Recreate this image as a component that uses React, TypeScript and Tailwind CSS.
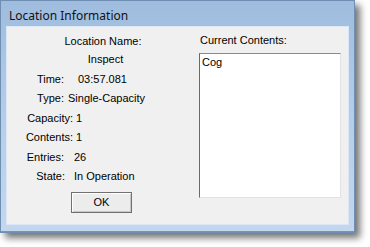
const rows = [
  { label: "Time:", value: "03:57.081", lw: "w-[57px]", gap: "ml-[14px]" },
  { label: "Type:", value: "Single-Capacity", lw: "w-[57px]", gap: "ml-[4px]" },
  { label: "Capacity:", value: "1", lw: "w-[66px]", gap: "ml-[3px]" },
  { label: "Contents:", value: "1", lw: "w-[66px]", gap: "ml-[3px]" },
  { label: "Entries:", value: "26", lw: "w-[57px]", gap: "ml-[10px]" },
  { label: "State:", value: "In Operation", lw: "w-[58px]", gap: "ml-[9px]" },
];

export default function App() {
  return (
    <div className="h-[247px] w-[370px] bg-white">
      <div className="flex h-[233px] w-[355px] flex-col border border-[#6f8fb2] bg-gradient-to-b from-[#9fbcde] via-[#b6cde9] to-[#c3d7ee] shadow-[5px_5px_7px_rgba(0,0,0,0.55)]">
        {/* title bar */}
        <div className="flex h-[25px] shrink-0 items-center pl-[8px] pt-[5px] text-[12px] text-[#111] [font-family:'Noto_Sans',sans-serif]">
          Location Information
        </div>

        {/* client area */}
        <div className="mx-[5px] flex flex-1 border border-[#dbe7f4] bg-[#f0f0f0] text-[11px] text-black [font-family:'Liberation_Sans',Arial,sans-serif]">
          <div className="flex w-[192px] flex-col pt-[5px]">
            <div className="flex h-[18px] items-center justify-center">Location Name:</div>
            <div className="flex h-[19px] items-center justify-center pl-[5px]">Inspect</div>
            {rows.map((r) => (
              <div key={r.label} className="flex h-[19.5px] items-center">
                <span className={`${r.lw} text-right`}>{r.label}</span>
                <span className={r.gap}>{r.value}</span>
              </div>
            ))}
            <button
              type="button"
              className="mt-[6px] ml-[64px] h-[21px] w-[61px] border border-[#707070] bg-[#ececec] text-[11px] shadow-[inset_1px_1px_0_#ffffff,inset_-1px_-1px_0_#c8c8c8]"
            >
              OK
            </button>
          </div>

          <div className="flex flex-col pt-[4px]">
            <div className="flex h-[18px] items-center pl-[1px]">Current Contents:</div>
            <div className="mt-[4px] h-[145px] w-[142px] border border-t-[#8a8a8a] border-l-[#6a6a6a] border-r-[#e2e2e2] border-b-[#e2e2e2] bg-white pl-[2px] pt-[2px] leading-[13px]">
              Cog
            </div>
          </div>
        </div>

        <div className="h-[7px] shrink-0 border-b border-[#56a6ac]" />
      </div>
    </div>
  );
}
